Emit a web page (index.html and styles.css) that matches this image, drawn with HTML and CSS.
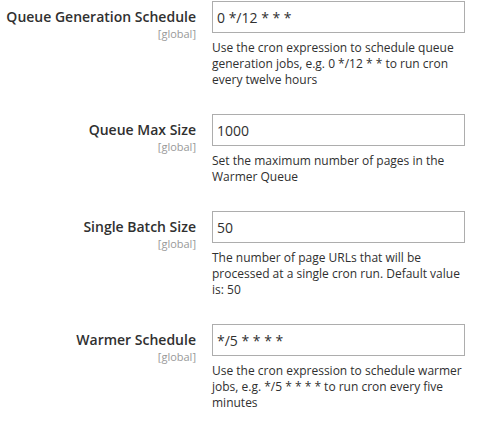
FILE: index.html
```html
<!DOCTYPE html>
<html lang="en">
<head>
    <meta charset="UTF-8">
    <meta name="viewport" content="width=device-width, initial-scale=1.0">
    <title>Warmer Settings</title>
    <link rel="stylesheet" href="styles.css">
</head>
<body>
    <div class="config">
        <div class="field">
            <div class="label">
                <span class="label-text">Queue Generation Schedule</span>
                <span class="scope">[global]</span>
            </div>
            <div class="control">
                <input type="text" class="input" value="0 */12 * * *">
                <p class="note">Use the cron expression to schedule queue generation jobs, e.g. 0 */12 * * to run cron every twelve hours</p>
            </div>
        </div>

        <div class="field">
            <div class="label">
                <span class="label-text">Queue Max Size</span>
                <span class="scope">[global]</span>
            </div>
            <div class="control">
                <input type="text" class="input" value="1000">
                <p class="note">Set the maximum number of pages in the Warmer Queue</p>
            </div>
        </div>

        <div class="field">
            <div class="label">
                <span class="label-text">Single Batch Size</span>
                <span class="scope">[global]</span>
            </div>
            <div class="control">
                <input type="text" class="input" value="50">
                <p class="note">The number of page URLs that will be processed at a single cron run. Default value is: 50</p>
            </div>
        </div>

        <div class="field">
            <div class="label">
                <span class="label-text">Warmer Schedule</span>
                <span class="scope">[global]</span>
            </div>
            <div class="control">
                <input type="text" class="input" value="*/5 * * * *">
                <p class="note">Use the cron expression to schedule warmer jobs, e.g. */5 * * * * to run cron every five minutes</p>
            </div>
        </div>
    </div>
</body>
</html>
```

FILE: styles.css
```css
body { margin: 0; background: #fff; font-family: "Open Sans", "Liberation Sans", sans-serif; color: #303030; }
.config { padding-top: 1px; }
.field { display: grid; grid-template-columns: 196px 253px; column-gap: 16px; margin-bottom: 26px; }
.label { text-align: right; padding-top: 7px; }
.label-text { display: block; font-size: 14px; font-weight: 600; line-height: 18px; color: #303030; }
.scope { display: block; font-size: 11px; line-height: 14px; margin-top: 1px; color: #999; }
.control { display: flex; flex-direction: column; }
.input { box-sizing: border-box; width: 100%; height: 32px; margin: 0; padding: 0 4px; border: 1px solid #adadad; border-radius: 0; font-family: inherit; font-size: 14px; color: #303030; background: #fff; outline: none; }
.note { margin: 7px 0 0; font-size: 12px; line-height: 16px; color: #303030; }
```
